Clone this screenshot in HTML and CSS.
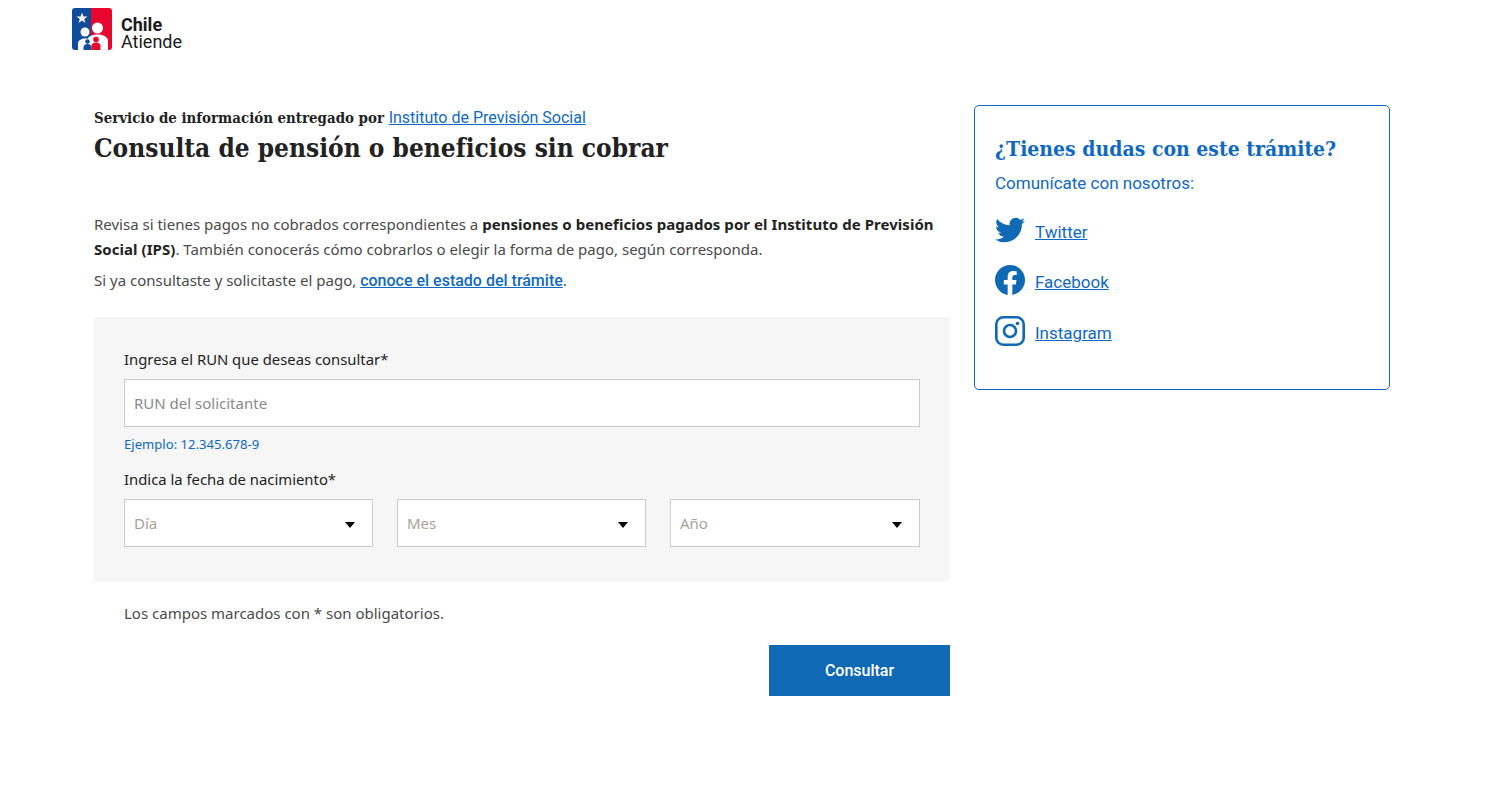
FILE: index.html
```html
<!DOCTYPE html>
<html lang="es">
<head>
<meta charset="utf-8">
<title>Consulta de pensión o beneficios sin cobrar</title>
<link rel="stylesheet" href="styles.css">
</head>
<body>
<header class="topbar">
  <a class="logo" href="#">
    <svg class="logo-mark" viewBox="0 0 40 42" width="40" height="42" aria-hidden="true">
      <path d="M3 0H19V42H3a3 3 0 0 1-3-3V3a3 3 0 0 1 3-3z" fill="#0f4c9c"/>
      <path d="M19 0H37a3 3 0 0 1 3 3V39a3 3 0 0 1-3 3H19z" fill="#e8062f"/>
      <path d="M10 4.500l1.400 3.900 4.100.1-3.300 2.500 1.200 4-3.400-2.400-3.400 2.400 1.200-4-3.300-2.500 4.100-.1z" fill="#fff"/>
      <circle cx="25.500" cy="20" r="5.500" fill="#fff"/>
      <path d="M15 42V33c0-4 4.500-6.500 10.500-6.500S36 29 36 33v9z" fill="#fff"/>
      <circle cx="13" cy="24" r="4.500" fill="#fff"/>
      <path d="M6 42V35.500c0-3 3.300-5 7-5s7 2 7 5V42z" fill="#fff"/>
      <circle cx="15.500" cy="33.500" r="2.300" fill="#0f4c9c"/>
      <path d="M11.500 42v-3c0-2 2.200-3 4-3s4 1 4 3v3z" fill="#0f4c9c"/>
      <circle cx="24" cy="31.500" r="2.800" fill="#e8062f"/>
      <path d="M19.500 42v-4.500c0-2 2.300-3 4.500-3s4.500 1 4.500 3V42z" fill="#e8062f"/>
    </svg>
    <span class="logo-text"><b>Chile</b><span>Atiende</span></span>
  </a>
</header>
<div class="layout">
  <main class="main">
    <p class="provider">Servicio de información entregado por <a href="#">Instituto de Previsión Social</a></p>
    <h1>Consulta de pensión o beneficios sin cobrar</h1>
    <p class="intro">Revisa si tienes pagos no cobrados correspondientes a <strong>pensiones o beneficios pagados por el Instituto de Previsión</strong> <strong>Social (IPS)</strong>. También conocerás cómo cobrarlos o elegir la forma de pago, según corresponda.</p>
    <p class="status">Si ya consultaste y solicitaste el pago, <a href="#">conoce el estado del trámite</a>.</p>
    <form class="panel">
      <label class="label" for="run">Ingresa el RUN que deseas consultar*</label>
      <input class="field" id="run" type="text" placeholder="RUN del solicitante">
      <p class="hint">Ejemplo: 12.345.678-9</p>
      <label class="label">Indica la fecha de nacimiento*</label>
      <div class="dates">
        <div class="select"><span>Día</span><i class="caret"></i></div>
        <div class="select"><span>Mes</span><i class="caret"></i></div>
        <div class="select"><span>Año</span><i class="caret"></i></div>
      </div>
    </form>
    <p class="required">Los campos marcados con * son obligatorios.</p>
    <div class="actions"><button class="submit" type="button">Consultar</button></div>
  </main>
  <aside class="help">
    <h2>¿Tienes dudas con este trámite?</h2>
    <p>Comunícate con nosotros:</p>
    <ul class="social">
      <li>
        <svg viewBox="0 0 24 24" width="30" height="30" aria-hidden="true"><path fill="#0f69b4" d="M24 4.557a9.830 9.830 0 0 1-2.828.775 4.932 4.932 0 0 0 2.165-2.724 9.864 9.864 0 0 1-3.127 1.195 4.916 4.916 0 0 0-8.380 4.482C7.728 8.088 4.100 6.128 1.671 3.149a4.822 4.822 0 0 0-.666 2.475c0 1.706.869 3.213 2.188 4.096a4.904 4.904 0 0 1-2.228-.616v.061a4.923 4.923 0 0 0 3.946 4.827 4.996 4.996 0 0 1-2.212.085 4.936 4.936 0 0 0 4.604 3.417A9.867 9.867 0 0 1 0 19.539a13.995 13.995 0 0 0 7.557 2.209c9.053 0 13.998-7.496 13.998-13.985 0-.210 0-.420-.015-.630A9.935 9.935 0 0 0 24 4.557z"/></svg>
        <a href="#">Twitter</a>
      </li>
      <li>
        <svg viewBox="0 0 24 24" width="30" height="30" aria-hidden="true"><path fill="#0f69b4" d="M24 12.073C24 5.405 18.627 0 12 0S0 5.405 0 12.073c0 6.026 4.388 11.020 10.125 11.927v-8.437H7.078v-3.490h3.047V9.413c0-3.026 1.792-4.697 4.533-4.697 1.312 0 2.686.236 2.686.236v2.971h-1.513c-1.491 0-1.956.930-1.956 1.886v2.264h3.328l-.532 3.490h-2.796V24C19.612 23.093 24 18.099 24 12.073z"/></svg>
        <a href="#">Facebook</a>
      </li>
      <li>
        <svg viewBox="0 0 30 30" width="30" height="30" aria-hidden="true"><rect x="1.300" y="1.300" width="27.400" height="27.400" rx="7" fill="none" stroke="#0f69b4" stroke-width="2.600"/><circle cx="15" cy="15" r="6" fill="none" stroke="#0f69b4" stroke-width="2.600"/><circle cx="22.500" cy="7.500" r="1.800" fill="#0f69b4"/></svg>
        <a href="#">Instagram</a>
      </li>
    </ul>
  </aside>
</div>
</body>
</html>
```
FILE: styles.css
```css
* { box-sizing: border-box; }
html, body { margin: 0; padding: 0; }
body { background: #fff; color: #4a4a4a; font-family: "Noto Sans", "Open Sans", sans-serif; font-size: 15px; }
a { color: #0f69c4; }
p { margin: 0; }

.topbar { height: 65px; padding: 8px 0 0 72px; }
.logo { display: inline-flex; align-items: flex-start; gap: 9px; text-decoration: none; color: #111; }
.logo-mark { display: block; flex: none; }
.logo-text { display: flex; flex-direction: column; font-family: Roboto, sans-serif; font-size: 18px; line-height: 17px; padding-top: 8px; color: #1a1a1a; }
.logo-text b { font-weight: 700; }

.layout { display: flex; align-items: flex-start; gap: 24px; padding: 41px 0 0 94px; }
.main { width: 856px; flex: none; }

.provider { font-family: "DejaVu Serif Condensed", "DejaVu Serif", serif; font-stretch: condensed; font-weight: 700; font-size: 14.9px; line-height: 24px; color: #222; white-space: nowrap; }
.provider a { font-family: Roboto, sans-serif; font-stretch: normal; font-weight: 400; font-size: 16px; }
h1 { margin: 0; font-family: "DejaVu Serif Condensed", "DejaVu Serif", serif; font-stretch: condensed; font-weight: 700; font-size: 26px; line-height: 36px; color: #222; white-space: nowrap; }

.intro { margin-top: 46px; line-height: 25px; }
.intro strong { color: #222; font-weight: 700; letter-spacing: .05px; }
.status { margin-top: 6px; line-height: 25px; }
.status a { font-family: Roboto, sans-serif; font-weight: 500; font-size: 16px; }

.panel { margin-top: 24px; height: 264px; background: #f6f6f6; padding: 30px 30px 0; }
.label { display: block; color: #222; font-size: 14.85px; line-height: 24px; }
.field { display: block; width: 100%; height: 48px; margin-top: 8px; padding: 0 9px; border: 1px solid #ccc; background: #fff; font: inherit; border-radius: 0; outline: none; }
.field::placeholder { color: #8a8a8a; opacity: 1; }
.hint { margin-top: 8px; font-size: 13.1px; line-height: 18px; color: #0f69c4; }
.hint + .label { margin-top: 14px; }
.dates { display: flex; gap: 24px; margin-top: 8px; }
.select { flex: 1; height: 48px; display: flex; align-items: center; justify-content: space-between; padding: 0 17px 0 9px; border: 1px solid #ccc; background: #fff; color: #a8a29a; }
.select:last-child { flex: none; width: 250px; }
.caret { width: 0; height: 0; margin-top: 3px; border-left: 5px solid transparent; border-right: 5px solid transparent; border-top: 6px solid #000; }

.required { margin-top: 20px; padding-left: 30px; line-height: 25px; }
.actions { display: flex; justify-content: flex-end; margin-top: 19px; }
.submit { width: 181px; height: 51px; border: 0; background: #0f69b4; color: #fff; font-family: Roboto, sans-serif; font-weight: 500; font-size: 16px; }

.help { width: 416px; height: 285px; flex: none; margin-top: -1px; border: 1px solid #0f69c4; border-radius: 5px; padding: 25px 20px 0; color: #0f69c4; }
.help h2 { margin: 0; font-family: "DejaVu Serif Condensed", "DejaVu Serif", serif; font-stretch: condensed; font-weight: 700; font-size: 21px; line-height: 36px; white-space: nowrap; }
.help p { margin-top: 4px; font-family: Roboto, sans-serif; font-size: 17px; line-height: 24px; }
.social { list-style: none; margin: 20px 0 0; padding: 0; display: flex; flex-direction: column; gap: 20px; }
.social li { display: flex; align-items: center; gap: 10px; height: 30px; }
.social li:last-child { margin-top: 1px; }
.social svg { display: block; flex: none; }
.social a { font-family: Roboto, sans-serif; font-size: 17px; padding-top: 4px; }
```
